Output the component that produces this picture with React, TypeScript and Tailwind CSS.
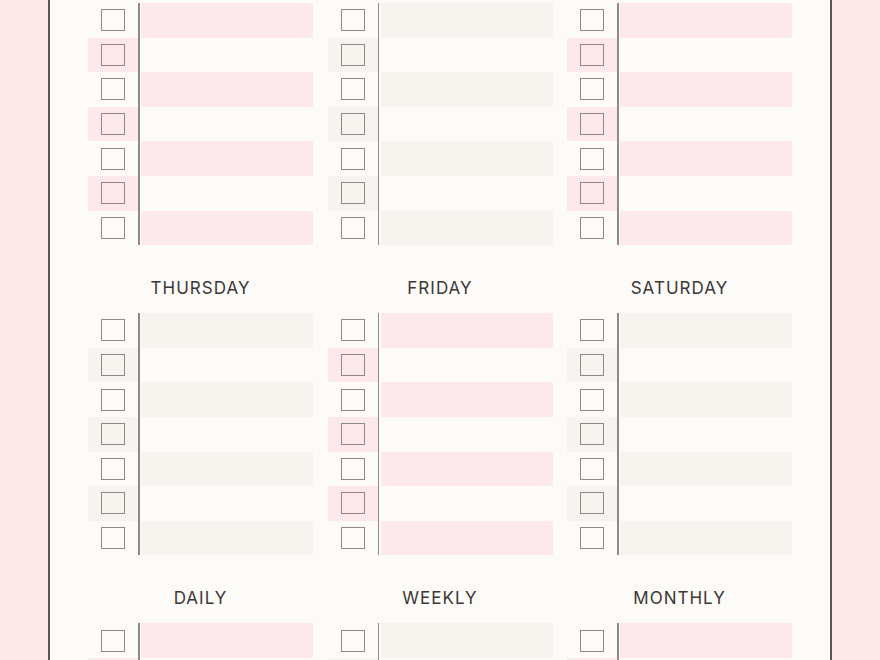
import React from 'react';

type Tone = 'pink' | 'beige';

interface Column {
  title?: string;
  tone: Tone;
}

const sections: Column[][] = [
  [{ tone: 'pink' }, { tone: 'beige' }, { tone: 'pink' }],
  [
    { title: 'THURSDAY', tone: 'beige' },
    { title: 'FRIDAY', tone: 'pink' },
    { title: 'SATURDAY', tone: 'beige' },
  ],
  [
    { title: 'DAILY', tone: 'pink' },
    { title: 'WEEKLY', tone: 'beige' },
    { title: 'MONTHLY', tone: 'pink' },
  ],
];

const toneBg: Record<Tone, string> = {
  pink: 'bg-[#fde9eb]',
  beige: 'bg-[#f7f3ee]',
};

const Checkbox: React.FC = () => (
  <div className="w-[24px] h-[22px] border-[1.5px] border-[#8e8886]" />
);

const TaskColumn: React.FC<{ tone: Tone }> = ({ tone }) => {
  const bg = toneBg[tone];
  return (
    <div className="flex w-[225px]">
      <div className="flex flex-col w-[50px]">
        {Array.from({ length: 7 }).map((_, i) => (
          <div
            key={i}
            className={`h-[34.6px] flex items-center justify-center ${i % 2 === 1 ? bg : ''}`}
          >
            <Checkbox />
          </div>
        ))}
      </div>
      <div className="w-[1.5px] bg-[#8f8a88]" />
      <div className="flex-1 flex flex-col pl-[1.5px]">
        {Array.from({ length: 7 }).map((_, i) => (
          <div key={i} className={`h-[34.6px] ${i % 2 === 0 ? bg : ''}`} />
        ))}
      </div>
    </div>
  );
};

const App: React.FC = () => {
  return (
    <div
      className="w-[880px] h-[660px] overflow-hidden bg-[#fde9ea] flex justify-center"
      style={{ fontFamily: 'Inter, "Noto Sans", sans-serif' }}
    >
      <div className="w-[784px] h-full bg-[#fcfbf8] border-x-2 border-[#5b5455] px-[38px] pt-[3px] flex flex-col">
        {sections.map((cols, si) => (
          <div key={si} className="flex flex-col">
            {cols[0].title && (
              <div className="flex gap-[14.5px] h-[68px] items-center pt-[19px]">
                {cols.map((c) => (
                  <div
                    key={c.title}
                    className="w-[225px] text-center text-[17px] tracking-[0.06em] text-[#3b3737]"
                  >
                    {c.title}
                  </div>
                ))}
              </div>
            )}
            <div className="flex gap-[14.5px]">
              {cols.map((c, ci) => (
                <TaskColumn key={ci} tone={c.tone} />
              ))}
            </div>
          </div>
        ))}
      </div>
    </div>
  );
};

export default App;
